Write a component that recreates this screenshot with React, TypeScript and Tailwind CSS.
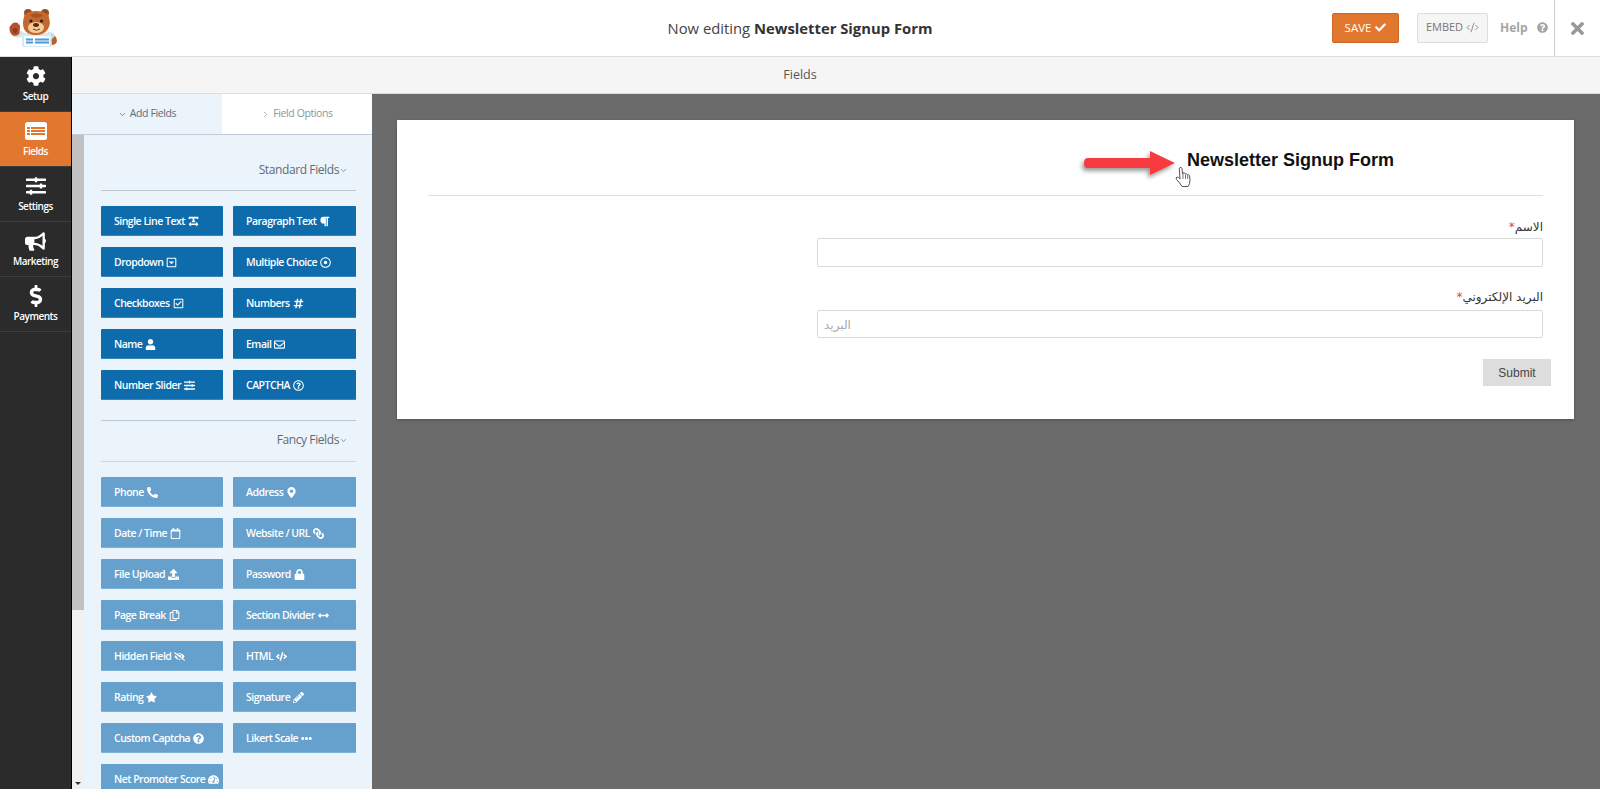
import React from 'react';
import type { IconType } from 'react-icons';
import { ChevronDown, ChevronRight, CodeXml } from 'lucide-react';
import {
    FaCog, FaSlidersH, FaBullhorn, FaDollarSign, FaCheck, FaCode, FaQuestionCircle, FaTimes,
    FaTextWidth, FaParagraph, FaRegCaretSquareDown, FaRegDotCircle, FaRegCheckSquare, FaHashtag,
    FaUser, FaRegEnvelope, FaRegQuestionCircle, FaPhoneAlt, FaMapMarkerAlt, FaRegCalendar, FaLink,
    FaUpload, FaLock, FaRegCopy, FaArrowsAltH, FaEyeSlash, FaStar, FaPencilAlt, FaEllipsisH,
    FaTachometerAlt,
} from 'react-icons/fa';

const standardFields: [string, IconType][] = [
    ['Single Line Text', FaTextWidth],
    ['Paragraph Text', FaParagraph],
    ['Dropdown', FaRegCaretSquareDown],
    ['Multiple Choice', FaRegDotCircle],
    ['Checkboxes', FaRegCheckSquare],
    ['Numbers', FaHashtag],
    ['Name', FaUser],
    ['Email', FaRegEnvelope],
    ['Number Slider', FaSlidersH],
    ['CAPTCHA', FaRegQuestionCircle],
];

const fancyFields: [string, IconType][] = [
    ['Phone', FaPhoneAlt],
    ['Address', FaMapMarkerAlt],
    ['Date / Time', FaRegCalendar],
    ['Website / URL', FaLink],
    ['File Upload', FaUpload],
    ['Password', FaLock],
    ['Page Break', FaRegCopy],
    ['Section Divider', FaArrowsAltH],
    ['Hidden Field', FaEyeSlash],
    ['HTML', FaCode],
    ['Rating', FaStar],
    ['Signature', FaPencilAlt],
    ['Custom Captcha', FaQuestionCircle],
    ['Likert Scale', FaEllipsisH],
    ['Net Promoter Score', FaTachometerAlt],
];

function Bear() {
    return (
        <svg width="60" height="56" viewBox="0 0 60 56" className="block">
            {/* arm and waving paw */}
            <path d="M11 34 Q14 39 21 37 L24 32 L17 30 Z" fill="#cfe6f0" />
            <path d="M9.5 27 Q9 33 13 35.5 Q18 36.5 19.5 33 L20 26 Q20 24 18.5 24.5 L18 23 L15.5 22.5 L13 23 L11.5 24.5 Z" fill="#b5522a" />
            <path d="M12.5 29 Q15 27 17.5 29 Q17.5 33 15 33.5 Q12.5 33 12.5 29 Z" fill="#8e3d1e" />
            {/* other arm */}
            <path d="M50 34 Q57 35 57 41 Q56 45 52 45 L50 44 Z" fill="#b8612c" />
            <path d="M48 32 Q53 32 55 36 L51 40 L48 38 Z" fill="#bfdeea" />
            {/* ears */}
            <circle cx="28" cy="13" r="4" fill="#9d4c26" />
            <circle cx="45" cy="13" r="4" fill="#9d4c26" />
            <circle cx="28" cy="13.5" r="2" fill="#6f3219" />
            <circle cx="45" cy="13.5" r="2" fill="#6f3219" />
            {/* shirt */}
            <path d="M22 33 H51 L52 46 Q52 47 50 47 H24 Q22 47 22 46 Z" fill="#d7eaf3" />
            <path d="M24 36 H50 V46 H24 Z" fill="#f7fbfd" />
            <path d="M26 38.5 H33 V40.5 H26 Z M35 38.5 H49 V40.5 H35 Z M26 41.5 H33 V43.5 H26 Z M35 41.5 H49 V43.5 H35 Z" fill="#4e9bd5" />
            {/* head */}
            <path d="M24 17 Q24 11 36 11 Q49 11 49 18 Q51 24 48 29 Q44 35 36 35 Q27 35 24 29 Q22 23 24 17 Z" fill="#c4682f" />
            <path d="M30 15 Q36 12 43 15 Q40 18 36.500 18 Q33 18 30 15 Z" fill="#a65427" />
            <ellipse cx="36" cy="27.500" rx="8" ry="5.500" fill="#f5cb97" />
            <circle cx="31" cy="21" r="1.600" fill="#2e1d14" />
            <circle cx="41.500" cy="21" r="1.600" fill="#2e1d14" />
            <ellipse cx="36" cy="25" rx="3" ry="1.900" fill="#5b2b16" />
            <path d="M33 29 Q36 31.500 40 29" fill="none" stroke="#6d3a1d" strokeWidth="1" />
        </svg>
    );
}

function FieldsIcon() {
    return (
        <svg width="22" height="18" viewBox="0 0 22 18">
            <rect width="22" height="18" rx="2.5" fill="#fff" />
            <path d="M2 5h3v2H2zM6 5h14v2H6zM2 8h3v2H2zM6 8h14v2H6zM2 11h3v2H2zM6 11h14v2H6z" fill="#e27730" />
        </svg>
    );
}

function NavItem({ label, active, children }: { label: string; active?: boolean; children: React.ReactNode }) {
    return (
        <div className={`h-[55px] flex flex-col items-center border-b border-[#3d3d3d] text-white ${active ? 'bg-[#e27730]' : ''}`}>
            <div className="h-[20px] mt-[9px] flex items-center justify-center">{children}</div>
            <p className="mt-[3px] text-[10px] leading-[14px] font-semibold tracking-[-0.5px]">{label}</p>
        </div>
    );
}

function FieldGrid({ fields, light }: { fields: [string, IconType][]; light?: boolean }) {
    return (
        <div className="grid grid-cols-[122px_123px] gap-x-[10px] gap-y-[11px]">
            {fields.map(([label, Icon]) => (
                <div
                    key={label}
                    className={`h-[30px] pl-[13px] pt-[2px] flex items-center gap-[3px] whitespace-nowrap rounded-[1px] text-[10.5px] tracking-[-0.5px] font-semibold text-white ${light ? 'bg-[#66a1cd] border-b border-[#7fb2d8]' : 'bg-[#0e6cad] border-b border-[#3b87bd]'}`}
                >
                    {label}
                    <Icon className={`text-[11px] ${label === 'Website / URL' ? '-scale-x-100' : ''}`} />
                </div>
            ))}
        </div>
    );
}

function SectionTitle({ label }: { label: string }) {
    return (
        <div className="flex justify-end items-center pr-[8px] text-[12px] tracking-[-0.4px] text-[#5f6b76]">
            {label}
            <ChevronDown size={9} strokeWidth={1.75} />
        </div>
    );
}

function Hand() {
    return (
        <svg width="16" height="22" viewBox="0 0 16 22" className="absolute left-[1175px] top-[166px]">
            <path
                d="M5 1.5 Q6.5 1 7 2.5 L7.5 8 L8 7 Q9.3 6.4 10 7.5 L10.3 8 Q11.6 7.4 12.3 8.6 Q13.8 8.2 14.5 9.6 L15 14 Q15 18 13 20.5 L7 20.5 Q5 17 1.5 13.5 Q0.4 11.8 2 11 Q3.5 10.8 5 13 L4.3 2.8 Q4.4 1.8 5 1.5 Z"
                fill="#fff"
                stroke="#555"
                strokeWidth="1"
            />
            <path d="M8 8v5M10.5 8.5v4.5M12.7 9v4" stroke="#555" strokeWidth="0.8" />
        </svg>
    );
}

function Arrow() {
    return (
        <svg width="100" height="40" viewBox="0 0 100 40" className="absolute left-[1080px] top-[146px] drop-shadow-[-2px_3px_2px_rgba(0,0,0,0.4)]">
            <path d="M8 12 H70 V5 L95 17 L70 29 V22 H8 Q4 22 4 17 Q4 12 8 12 Z" fill="#f73b3f" />
        </svg>
    );
}

export default function App() {
    return (
        <div className="relative w-[1600px] h-[789px] overflow-hidden bg-[#6b6b6b] font-['Open_Sans',sans-serif] flex flex-col">
            <div className="h-[57px] shrink-0 bg-white border-b border-[#dddddd] grid grid-cols-[1fr_auto_1fr] items-center">
                <div>
                    <Bear />
                </div>
                <p className="text-center text-[14.8px] text-[#444]">
                    Now editing <span className="font-bold text-[#333]">Newsletter Signup Form</span>
                </p>
                <div className="flex items-center justify-end h-full">
                    <div className="w-[67px] h-[30px] bg-[#e27730] border border-[#cd6622] rounded-[2px] text-white text-[11.5px] flex items-center justify-center gap-[4px] mb-[1px]">
                        SAVE <FaCheck className="text-[11px]" />
                    </div>
                    <div className="ml-[18px] w-[71px] h-[30px] bg-[#f5f5f5] border border-[#dddddd] rounded-[2px] text-[#777] text-[11px] flex items-center justify-center gap-[3px] mb-[1px]">
                        EMBED <CodeXml size={13} strokeWidth={1.5} />
                    </div>
                    <div className="ml-[12px] w-[47px] text-[#a5a5a5] text-[12px] font-bold flex items-center gap-[9px] mb-[1px]">
                        Help <FaQuestionCircle className="text-[11px] shrink-0" />
                    </div>
                    <div className="ml-[7px] w-[46px] h-full border-l border-[#ccc] flex items-center justify-center text-[#999] text-[19px]">
                        <FaTimes />
                    </div>
                </div>
            </div>

            <div className="flex flex-1 min-h-0">
                <div className="w-[72px] shrink-0 bg-[#2b2b2b] border-r border-black">
                    <NavItem label="Setup"><FaCog className="text-[20px]" /></NavItem>
                    <NavItem label="Fields" active><FieldsIcon /></NavItem>
                    <NavItem label="Settings"><FaSlidersH className="text-[20px]" /></NavItem>
                    <NavItem label="Marketing"><FaBullhorn className="text-[21px]" /></NavItem>
                    <NavItem label="Payments"><FaDollarSign className="text-[22px]" /></NavItem>
                </div>

                <div className="flex-1 min-w-0 flex flex-col">
                    <div className="h-[37px] shrink-0 bg-[#f5f5f5] border-b border-[#dddddd] flex items-center justify-center pr-[72px] text-[12.5px] text-[#555]">
                        Fields
                    </div>
                    <div className="flex flex-1 min-h-0">
                        <div className="w-[300px] shrink-0 flex flex-col bg-[#ebf3fb] overflow-hidden">
                            <div className="h-[41px] shrink-0 flex text-[10.5px] tracking-[-0.4px] border-b border-[#c3cdd8]">
                                <div className="w-[150px] flex items-center justify-center gap-[3px] text-[#5f6b76]">
                                    <ChevronDown size={9} strokeWidth={2} /> Add Fields
                                </div>
                                <div className="w-[150px] flex items-center justify-center gap-[3px] bg-white text-[#8a949e]">
                                    <ChevronRight size={9} strokeWidth={2} /> Field Options
                                </div>
                            </div>
                            <div className="flex flex-1 min-h-0">
                                <div className="w-[12px] shrink-0 flex flex-col bg-[#f1f1f1]">
                                    <div className="h-[475px] bg-[#c1c1c1]" />
                                    <div className="mt-auto mb-[4px] flex justify-center">
                                        <div className="w-0 h-0 border-x-[3px] border-x-transparent border-t-[3px] border-t-[#333]" />
                                    </div>
                                </div>
                                <div className="flex-1 pl-[17px] pr-[16px] pt-[26px]">
                                    <div className="w-[255px]">
                                        <SectionTitle label="Standard Fields" />
                                        <div className="h-px bg-[#bcc7d4] mt-[11px] mb-[15px]" />
                                        <FieldGrid fields={standardFields} />
                                        <div className="h-px bg-[#bcc7d4] mt-[20px] mb-[10px]" />
                                        <SectionTitle label="Fancy Fields" />
                                        <div className="h-px bg-[#ced7e1] mt-[12px] mb-[15px]" />
                                        <FieldGrid fields={fancyFields} light />
                                    </div>
                                </div>
                            </div>
                        </div>

                        <div className="flex-1 min-w-0 pl-[25px] pr-[26px] pt-[26px]">
                            <div className="h-[299px] bg-white shadow-[0_1px_3px_rgba(0,0,0,0.25)] pt-[29px] font-['Liberation_Sans',sans-serif]">
                                <p className="pl-[790px] text-[18px] leading-[22px] font-bold text-[#111]">Newsletter Signup Form</p>
                                <div className="mx-[31px] mt-[24px] h-px bg-[#dddddd]" />
                                <div dir="rtl" className="pr-[31px] pl-[420px] mt-[22px]">
                                    <label className="block text-[12px] leading-[18px] text-[#333] font-['DejaVu_Sans',sans-serif]">الاسم<span className="text-[#e8434a]">*</span></label>
                                    <div className="mt-[2px] h-[29px] border border-[#d9d9d9] rounded-[2px]" />
                                    <label className="block mt-[21px] text-[12px] leading-[18px] text-[#333] font-['DejaVu_Sans',sans-serif]">البريد الإلكتروني<span className="text-[#e8434a]">*</span></label>
                                    <div dir="ltr" className="mt-[4px] h-[28px] border border-[#d9d9d9] rounded-[2px] pl-[6px] pt-[1px] flex items-center text-[12px] text-[#aaa] font-['DejaVu_Sans',sans-serif]">البريد</div>
                                </div>
                                <div className="flex justify-end pr-[23px] mt-[21px]">
                                    <div className="w-[68px] h-[27px] bg-[#dddddd] flex items-center justify-center text-[12px] text-[#444]">Submit</div>
                                </div>
                            </div>
                        </div>
                    </div>
                </div>
            </div>

            <Arrow />
            <Hand />
        </div>
    );
}
